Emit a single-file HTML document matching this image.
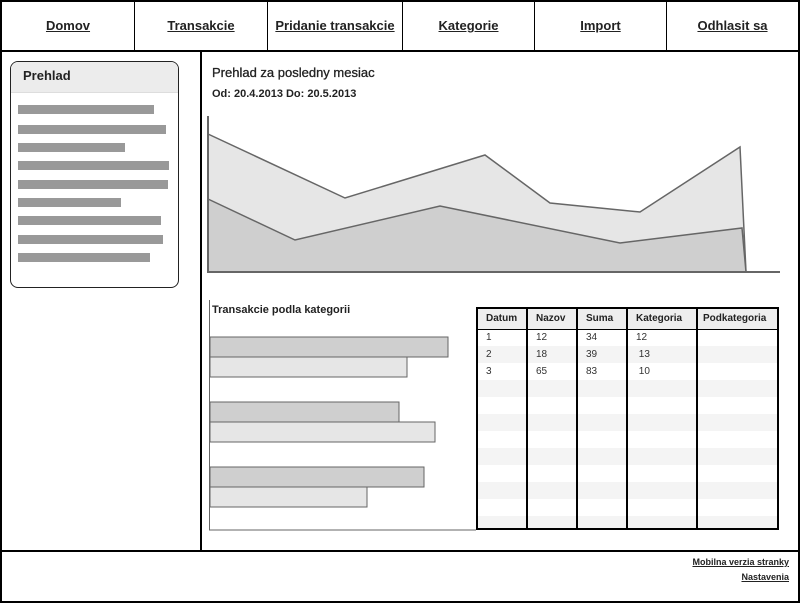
<!DOCTYPE html>
<html><head><style>
body{margin:0;width:803px;height:606px;position:relative;font-family:"Liberation Sans",Arial,sans-serif;background:#fff;overflow:hidden}
.a{position:absolute}
.nav{top:0;height:51px;display:flex;align-items:center;justify-content:center;font-size:13px;font-weight:bold;text-decoration:underline;color:#222;border-right:1px solid #000;box-sizing:border-box}
.ln{background:#999;height:9px;left:18px}
table{border-collapse:collapse;font-size:10px;color:#333;table-layout:fixed}
td{border-left:2px solid #000;border-right:2px solid #000;height:17px;padding:0 0 0 8px;box-sizing:border-box;overflow:hidden;white-space:nowrap}
th{border:2px solid #000;border-width:0 2px 1px 2px;height:21px;background:#eee;font-weight:bold;font-size:10px;text-align:left;padding:0 0 0 8px;color:#222;overflow:hidden;white-space:nowrap;box-sizing:border-box}
tr:nth-child(odd) td{background:#f4f4f4}
.ft{right:14px;font-size:9px;font-weight:bold;text-decoration:underline;color:#222}
</style></head><body>
<div class="a" style="left:0;top:0;width:800px;height:603px;border:2px solid #000;box-sizing:border-box"></div>
<div class="a" style="left:0;top:50px;width:800px;height:2px;background:#000"></div>
<div class="a nav" style="left:2px;width:133px">Domov</div>
<div class="a nav" style="left:135px;width:133px">Transakcie</div>
<div class="a nav" style="left:268px;width:135px">Pridanie transakcie</div>
<div class="a nav" style="left:403px;width:132px">Kategorie</div>
<div class="a nav" style="left:535px;width:132px">Import</div>
<div class="a nav" style="left:667px;width:131px;border-right:none">Odhlasit sa</div>
<div class="a" style="left:200px;top:51px;width:2px;height:501px;background:#000"></div>
<div class="a" style="left:0;top:550px;width:800px;height:2px;background:#000"></div>
<div class="a" style="left:10px;top:61px;width:169px;height:227px;border:1px solid #222;border-radius:8px;box-sizing:border-box;overflow:hidden">
<div style="height:30px;background:#ececec;border-bottom:1px solid #ddd"></div></div>
<div class="a" style="left:23px;top:68px;font-size:13px;font-weight:bold;color:#222">Prehlad</div>
<div class="a ln" style="top:105px;width:136px"></div>
<div class="a ln" style="top:125px;width:148px"></div>
<div class="a ln" style="top:143px;width:107px"></div>
<div class="a ln" style="top:161px;width:151px"></div>
<div class="a ln" style="top:180px;width:150px"></div>
<div class="a ln" style="top:198px;width:103px"></div>
<div class="a ln" style="top:216px;width:143px"></div>
<div class="a ln" style="top:235px;width:145px"></div>
<div class="a ln" style="top:253px;width:132px"></div>
<div class="a" style="left:212px;top:65px;font-size:13px;color:#222;-webkit-text-stroke:0.3px #222">Prehlad za posledny mesiac</div>
<div class="a" style="left:212px;top:88px;font-size:11px;font-weight:bold;color:#222">Od: 20.4.2013 Do: 20.5.2013</div>
<svg class="a" style="left:0;top:0" width="803" height="606">
<polygon points="208,134 345,198 485,155 550,203 640,212 740,147 746,272 208,272" fill="#e6e6e6" stroke="#666" stroke-width="1.5"/>
<polygon points="208,199 295,240 440,206 620,243 742,228 746,272 208,272" fill="#cfcfcf" stroke="#666" stroke-width="1.5"/>
<polyline points="208,116 208,272 780,272" fill="none" stroke="#666" stroke-width="2"/>
<polyline points="209.5,300 209.5,530 476,530" fill="none" stroke="#666" stroke-width="1"/>
<g stroke="#666" stroke-width="1">
<rect x="210" y="337" width="238" height="20" fill="#cfcfcf"/>
<rect x="210" y="357" width="197" height="20" fill="#e6e6e6"/>
<rect x="210" y="402" width="189" height="20" fill="#cfcfcf"/>
<rect x="210" y="422" width="225" height="20" fill="#e6e6e6"/>
<rect x="210" y="467" width="214" height="20" fill="#cfcfcf"/>
<rect x="210" y="487" width="157" height="20" fill="#e6e6e6"/>
</g></svg>
<div class="a" style="left:212px;top:304px;font-size:11px;font-weight:bold;color:#222">Transakcie podla kategorii</div>
<table class="a" style="left:476px;top:307px;width:301px;border-bottom:2px solid #000;border-top:2px solid #000">
<colgroup><col style="width:50px"><col style="width:50px"><col style="width:50px"><col style="width:70px"><col style="width:81px"></colgroup>
<tr><th>Datum</th><th>Nazov</th><th>Suma</th><th>Kategoria</th><th style="padding-left:5px">Podkategoria</th></tr>
<tr><td>1</td><td>12</td><td>34</td><td>12</td><td></td></tr>
<tr><td>2</td><td>18</td><td>39</td><td>&nbsp;13</td><td></td></tr>
<tr><td>3</td><td>65</td><td>83</td><td>&nbsp;10</td><td></td></tr>
<tr><td></td><td></td><td></td><td></td><td></td></tr>
<tr><td></td><td></td><td></td><td></td><td></td></tr>
<tr><td></td><td></td><td></td><td></td><td></td></tr>
<tr><td></td><td></td><td></td><td></td><td></td></tr>
<tr><td></td><td></td><td></td><td></td><td></td></tr>
<tr><td></td><td></td><td></td><td></td><td></td></tr>
<tr><td></td><td></td><td></td><td></td><td></td></tr>
<tr><td></td><td></td><td></td><td></td><td></td></tr>
<tr><td style="height:13px"></td><td style="height:13px"></td><td style="height:13px"></td><td style="height:13px"></td><td style="height:13px"></td></tr>
</table>
<div class="a ft" style="top:557px">Mobilna verzia stranky</div>
<div class="a ft" style="top:572px">Nastavenia</div>
</body></html>
